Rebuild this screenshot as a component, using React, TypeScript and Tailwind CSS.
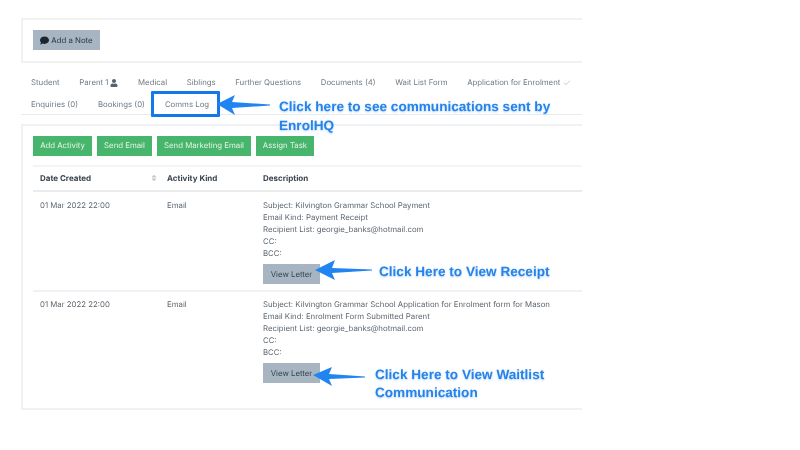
import { FaComment, FaUser, FaSort } from "react-icons/fa";
import { LuCheck } from "react-icons/lu";

function Arrow({ className, w, h, d }: { className: string; w: number; h: number; d: string }) {
  return (
    <svg className={className} width={w} height={h} viewBox={`0 0 ${w} ${h}`}>
      <path d={d} fill="#2085f0" />
    </svg>
  );
}

function Row({ lines, first }: { lines: string[]; first?: boolean }) {
  const pad = first ? "pt-[7px]" : "pt-[6px]";
  return (
    <div className={first ? "flex h-[100px] border-b-2 border-[#f0f1f2]" : "flex h-[100px]"}>
      <div className={`w-[127px] pl-[7px] ${pad} leading-[12px]`}>01 Mar 2022 22:00</div>
      <div className={`w-[96px] pl-[7px] ${pad} leading-[12px]`}>Email</div>
      <div className={`flex-1 pl-[7px] ${pad} leading-[12px] whitespace-nowrap`}>
        {lines.map((l) => (
          <div key={l}>{l}</div>
        ))}
        <div className="mt-[5px] flex h-[20px] w-[57px] items-center justify-center bg-[#a6b5c1] text-[#36434e]">
          View Letter
        </div>
      </div>
    </div>
  );
}

export default function App() {
  const tabs1 = ["Student", "Parent 1", "Medical", "Siblings", "Further Questions", "Documents (4)", "Wait List Form", "Application for Enrolment"];
  const tabs2 = ["Enquiries (0)", "Bookings (0)", "Comms Log"];
  const callout = "font-['Liberation_Sans',sans-serif] font-bold text-[#2583ea] [text-shadow:0_1px_2px_rgba(37,131,234,0.35)] absolute whitespace-nowrap";
  return (
    <div className="relative h-[450px] w-[800px] overflow-hidden bg-white font-['Inter',sans-serif] text-[7.8px] text-[#5c6670] blur-[0.45px] [text-rendering:geometricPrecision]">
      <div className="w-[582px] overflow-hidden pl-[21px] pt-[18px]">
        <div className="h-[45px] w-[600px] border-2 border-[#f0f1f2] pl-[10px] pt-[10px]">
          <div className="flex h-[20px] w-[67px] items-center justify-center gap-[2px] bg-[#a6b5c1] pt-[1px] text-[#2b3640]">
            <FaComment className="h-[9px] w-[9px] text-[#1d262e]" />
            <span>Add a Note</span>
          </div>
        </div>

        <div className="border-b border-[#e8eaec] pt-[9px] text-[#6e7a84]">
          <div className="ml-[0.2px] flex h-[21px] items-center whitespace-nowrap">
            {tabs1.map((t) => (
              <div key={t} className="flex items-center gap-[2px] px-[9.8px]">
                <span>{t}</span>
                {t === "Parent 1" && <FaUser className="h-[8px] w-[8px] text-[#56626c]" />}
                {t.startsWith("Application") && <LuCheck className="ml-[1px] h-[8px] w-[8px] text-[#a5b0b8]" />}
              </div>
            ))}
          </div>
          <div className="flex h-[21px] items-start pt-[6px] whitespace-nowrap">
            {tabs2.map((t) => (
              <div key={t} className="px-[10px] leading-[10px]">{t}</div>
            ))}
          </div>
        </div>

        <div className="mt-[9px] h-[286px] w-[600px] border-2 border-[#f0f1f2] pl-[10px] pt-[10px]">
          <div className="flex gap-[5px] whitespace-nowrap text-[#e3f4e8]">
            <div className="flex h-[20px] w-[59px] items-center justify-center bg-[#48b56c]">Add Activity</div>
            <div className="flex h-[20px] w-[55px] items-center justify-center bg-[#48b56c]">Send Email</div>
            <div className="flex h-[20px] w-[94px] items-center justify-center bg-[#48b56c]">Send Marketing Email</div>
            <div className="flex h-[20px] w-[58px] items-center justify-center bg-[#48b56c]">Assign Task</div>
          </div>
          <div className="mt-[9px] flex h-[27px] items-center border-y-2 border-t-[#f3f4f5] border-b-[#e9ebed] pb-[1px] text-[8px] font-bold text-[#39434c]">
            <div className="flex w-[127px] items-center justify-between pl-[7px] pr-[3px]">
              <span>Date Created</span>
              <FaSort className="h-[8px] w-[6px] text-[#c3c9ce]" />
            </div>
            <div className="w-[96px] pl-[7px]">Activity Kind</div>
            <div className="pl-[7px]">Description</div>
          </div>
          <Row first lines={["Subject: Kilvington Grammar School Payment", "Email Kind: Payment Receipt", "Recipient List: georgie_banks@hotmail.com", "CC:", "BCC:"]} />
          <Row lines={["Subject: Kilvington Grammar School Application for Enrolment form for Mason", "Email Kind: Enrolment Form Submitted Parent", "Recipient List: georgie_banks@hotmail.com", "CC:", "BCC:"]} />
        </div>
      </div>

      <div className="absolute left-[151px] top-[91px] h-[26px] w-[69px] rounded-[1px] border-[3px] border-[#1578ea]" />
      <Arrow className="absolute left-[216px] top-[94px]" w={56} h={22} d="M1 10 L19 1 L16 8 L54 10.5 L54 11.5 L16 14 L19 21 Z" />
      <Arrow className="absolute left-[314px] top-[259px]" w={60} h={22} d="M1 11 L21 1 L18 9 L58 10.5 L58 11.5 L18 14 L21 21 Z" />
      <Arrow className="absolute left-[312px] top-[366px]" w={55} h={21} d="M1 9 L20 1 L17 8 L53 10.5 L53 11.5 L17 13 L20 20 Z" />

      <div className={`${callout} left-[279px] top-[97px] text-[13.6px] leading-[19px]`}>
        Click here to see communications sent by
        <br />
        EnrolHQ
      </div>
      <div className={`${callout} left-[379px] top-[262px] text-[13.6px] leading-[19px]`}>Click Here to View Receipt</div>
      <div className={`${callout} left-[375px] top-[366px] text-[13.6px] leading-[18px]`}>
        Click Here to View Waitlist
        <br />
        Communication
      </div>
    </div>
  );
}
